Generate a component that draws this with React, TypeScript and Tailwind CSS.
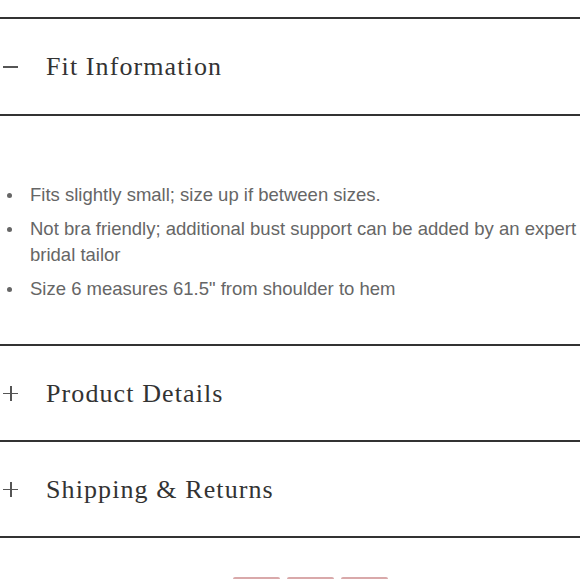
const FIT_NOTES = [
  'Fits slightly small; size up if between sizes.',
  'Not bra friendly; additional bust support can be added by an expert bridal tailor',
  'Size 6 measures 61.5" from shoulder to hem',
];

function ToggleIcon({ open }: { open: boolean }) {
  return (
    <span className="relative block h-[15px] w-[15px] shrink-0">
      <span className="absolute left-0 top-[7px] h-[1.5px] w-[15px] bg-[#555]" />
      {!open && <span className="absolute left-[7px] top-0 h-[15px] w-[1.5px] bg-[#555]" />}
    </span>
  );
}

function SectionHeader({ title, open, first }: { title: string; open: boolean; first?: boolean }) {
  return (
    <div
      className={`flex items-center gap-[28px] border-t-2 border-[#333] pl-[3px] ${first ? 'h-[97px]' : 'h-[96px]'}`}
    >
      <ToggleIcon open={open} />
      <h3 className="font-['Liberation_Serif',serif] text-[26px] tracking-[1.1px] text-[#333]">{title}</h3>
    </div>
  );
}

export default function App() {
  return (
    <div className="h-[580px] w-[580px] overflow-hidden bg-white">
      <div className="h-[17px]" />
      <SectionHeader title="Fit Information" open first />
      <div className="border-t-2 border-[#333] pb-[42px] pt-[66px] font-['Liberation_Sans',Arial,sans-serif] text-[18.5px] leading-[26px] text-[#666]">
        <ul className="flex flex-col gap-[8px]">
          {FIT_NOTES.map((note) => (
            <li key={note} className="flex">
              <span className="flex h-[26px] w-[30px] shrink-0 items-center pl-[7px]">
                <span className="h-[5px] w-[5px] rounded-full bg-[#666]" />
              </span>
              <span>{note}</span>
            </li>
          ))}
        </ul>
      </div>
      <SectionHeader title="Product Details" open={false} />
      <SectionHeader title="Shipping & Returns" open={false} />
      <div className="border-t-2 border-[#333] pt-[39px]">
        <div className="flex gap-[7px] pl-[233px]">
          <span className="h-[20px] w-[47px] rounded-t-[2px] border-t-2 border-[#d9a9aa]" />
          <span className="h-[20px] w-[47px] rounded-t-[2px] border-t-2 border-[#d9a9aa]" />
          <span className="h-[20px] w-[47px] rounded-t-[2px] border-t-2 border-[#d9a9aa]" />
        </div>
      </div>
    </div>
  );
}
